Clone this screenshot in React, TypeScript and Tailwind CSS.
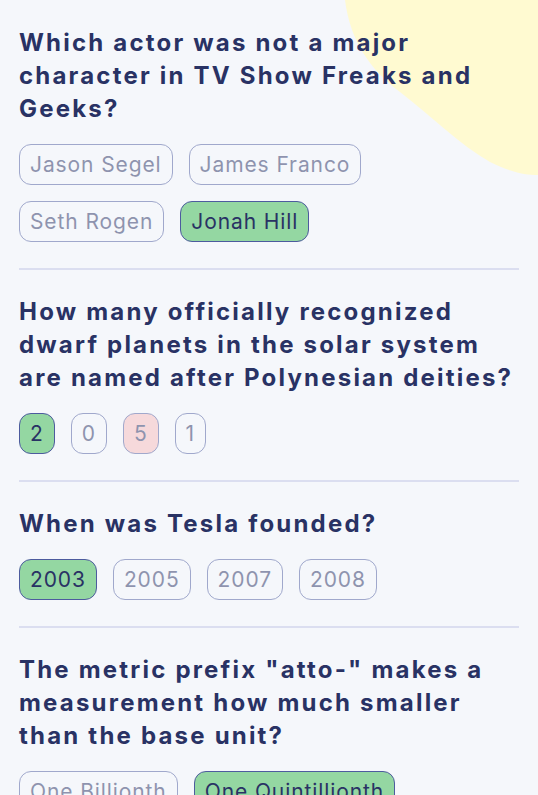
type Answer = { text: string; state: "correct" | "wrong" | "idle" };

const questions: { q: string; answers: Answer[] }[] = [
  {
    q: "Which actor was not a major character in TV Show Freaks and Geeks?",
    answers: [
      { text: "Jason Segel", state: "idle" },
      { text: "James Franco", state: "idle" },
      { text: "Seth Rogen", state: "idle" },
      { text: "Jonah Hill", state: "correct" },
    ],
  },
  {
    q: "How many officially recognized dwarf planets in the solar system are named after Polynesian deities?",
    answers: [
      { text: "2", state: "correct" },
      { text: "0", state: "idle" },
      { text: "5", state: "wrong" },
      { text: "1", state: "idle" },
    ],
  },
  {
    q: "When was Tesla founded?",
    answers: [
      { text: "2003", state: "correct" },
      { text: "2005", state: "idle" },
      { text: "2007", state: "idle" },
      { text: "2008", state: "idle" },
    ],
  },
  {
    q: 'The metric prefix "atto-" makes a measurement how much smaller than the base unit?',
    answers: [
      { text: "One Billionth", state: "idle" },
      { text: "One Quintillionth", state: "correct" },
    ],
  },
];

function AnswerButton({ a }: { a: Answer }) {
  const look =
    a.state === "correct"
      ? "bg-[#94D7A2] border-[#4D5B9E]"
      : a.state === "wrong"
      ? "bg-[#F8BCBC] border-[#4D5B9E] opacity-50"
      : "bg-transparent border-[#4D5B9E] opacity-50";
  return (
    <button
      className={`h-[41px] px-[10px] rounded-[12px] border text-[21px] leading-6 tracking-[0.9px] text-[#293264] font-normal flex items-center ${look}`}
    >
      {a.text}
    </button>
  );
}

export default function App() {
  return (
    <div className="relative min-h-screen overflow-hidden bg-[#F5F7FB] font-['Inter',sans-serif]">
      {/* blob in the corner */}
      <svg className="absolute top-0 right-0 w-[193px] h-[176px]" viewBox="345 0 193 176">
        <path
          d="M345 0 C350 40 370 70 400 92 C430 115 460 145 490 162 C510 172 525 175 538 175 L538 0 Z"
          fill="#FFFAD1"
        />
      </svg>

      <div className="relative px-[19px] pt-[26px]">
        {questions.map((item, i) => (
          <div key={i}>
            {i > 0 && <div className="h-[2px] bg-[#DBDEF0] mt-[26px] mb-[25px]" />}
            <h2 className="text-[24px] leading-[33px] font-bold tracking-[2.2px] text-[#293264]">
              {item.q}
            </h2>
            <div className="mt-[19px] flex flex-wrap gap-4">
              {item.answers.map((a) => (
                <AnswerButton key={a.text} a={a} />
              ))}
            </div>
          </div>
        ))}
      </div>
    </div>
  );
}
